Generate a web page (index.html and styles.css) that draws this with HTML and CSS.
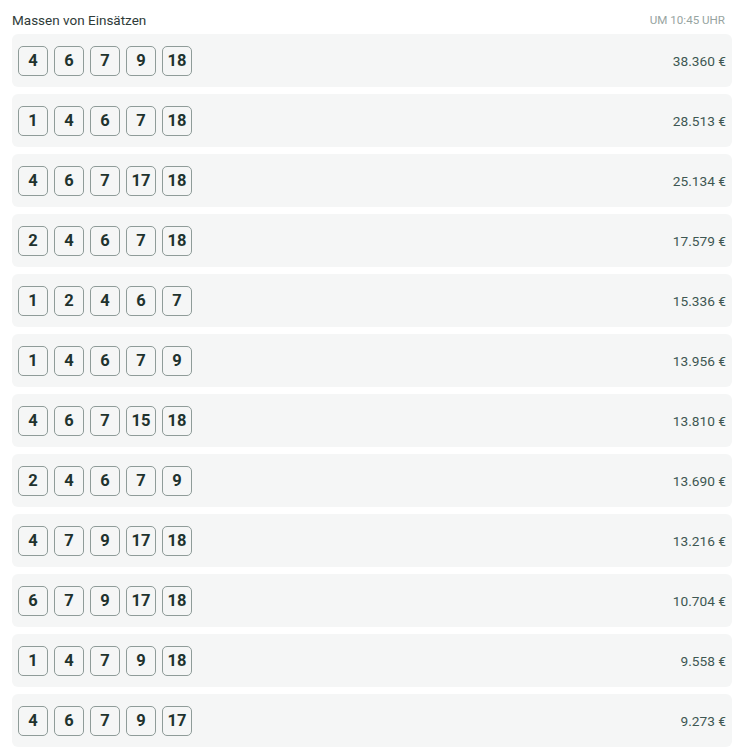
FILE: index.html
```html
<!DOCTYPE html>
<html lang="de">
<head>
<meta charset="utf-8">
<title>Massen von Einsätzen</title>
<link rel="stylesheet" href="styles.css">
</head>
<body>
<div class="panel">
  <div class="header">
    <span class="title">Massen von Einsätzen</span>
    <span class="time">UM 10:45 UHR</span>
  </div>
  <div class="list">
    <div class="row"><div class="balls"><span class="ball">4</span><span class="ball">6</span><span class="ball">7</span><span class="ball">9</span><span class="ball">18</span></div><span class="amount">38.360 €</span></div>
    <div class="row"><div class="balls"><span class="ball">1</span><span class="ball">4</span><span class="ball">6</span><span class="ball">7</span><span class="ball">18</span></div><span class="amount">28.513 €</span></div>
    <div class="row"><div class="balls"><span class="ball">4</span><span class="ball">6</span><span class="ball">7</span><span class="ball">17</span><span class="ball">18</span></div><span class="amount">25.134 €</span></div>
    <div class="row"><div class="balls"><span class="ball">2</span><span class="ball">4</span><span class="ball">6</span><span class="ball">7</span><span class="ball">18</span></div><span class="amount">17.579 €</span></div>
    <div class="row"><div class="balls"><span class="ball">1</span><span class="ball">2</span><span class="ball">4</span><span class="ball">6</span><span class="ball">7</span></div><span class="amount">15.336 €</span></div>
    <div class="row"><div class="balls"><span class="ball">1</span><span class="ball">4</span><span class="ball">6</span><span class="ball">7</span><span class="ball">9</span></div><span class="amount">13.956 €</span></div>
    <div class="row"><div class="balls"><span class="ball">4</span><span class="ball">6</span><span class="ball">7</span><span class="ball">15</span><span class="ball">18</span></div><span class="amount">13.810 €</span></div>
    <div class="row"><div class="balls"><span class="ball">2</span><span class="ball">4</span><span class="ball">6</span><span class="ball">7</span><span class="ball">9</span></div><span class="amount">13.690 €</span></div>
    <div class="row"><div class="balls"><span class="ball">4</span><span class="ball">7</span><span class="ball">9</span><span class="ball">17</span><span class="ball">18</span></div><span class="amount">13.216 €</span></div>
    <div class="row"><div class="balls"><span class="ball">6</span><span class="ball">7</span><span class="ball">9</span><span class="ball">17</span><span class="ball">18</span></div><span class="amount">10.704 €</span></div>
    <div class="row"><div class="balls"><span class="ball">1</span><span class="ball">4</span><span class="ball">7</span><span class="ball">9</span><span class="ball">18</span></div><span class="amount">9.558 €</span></div>
    <div class="row"><div class="balls"><span class="ball">4</span><span class="ball">6</span><span class="ball">7</span><span class="ball">9</span><span class="ball">17</span></div><span class="amount">9.273 €</span></div>
  </div>
</div>
</body>
</html>
```

FILE: styles.css
```css
html, body {
  margin: 0;
  padding: 0;
  background: #ffffff;
}

body {
  font-family: Roboto, "Liberation Sans", sans-serif;
  color: #2b3a37;
}

.panel {
  padding: 0 6px 0 12px;
}

.header {
  display: flex;
  justify-content: space-between;
  align-items: center;
  height: 22px;
  padding: 9px 7px 3px 0;
}

.title {
  font-size: 13.5px;
  color: #2f3b39;
}

.time {
  font-size: 11.6px;
  color: #97a4a1;
}

.list {
  display: flex;
  flex-direction: column;
  gap: 7px;
}

.row {
  display: flex;
  align-items: center;
  justify-content: space-between;
  height: 53px;
  padding: 0 6px;
  background: #f5f6f6;
  border-radius: 6px;
}

.balls {
  display: flex;
  gap: 6px;
}

.ball {
  box-sizing: border-box;
  width: 30px;
  height: 30px;
  display: flex;
  align-items: center;
  justify-content: center;
  border: 1px solid #8f9c99;
  border-radius: 5px;
  background: transparent;
  font-size: 16.5px;
  font-weight: 700;
  color: #1f332f;
}

.amount {
  font-size: 13.7px;
  color: #3d5752;
}
```
